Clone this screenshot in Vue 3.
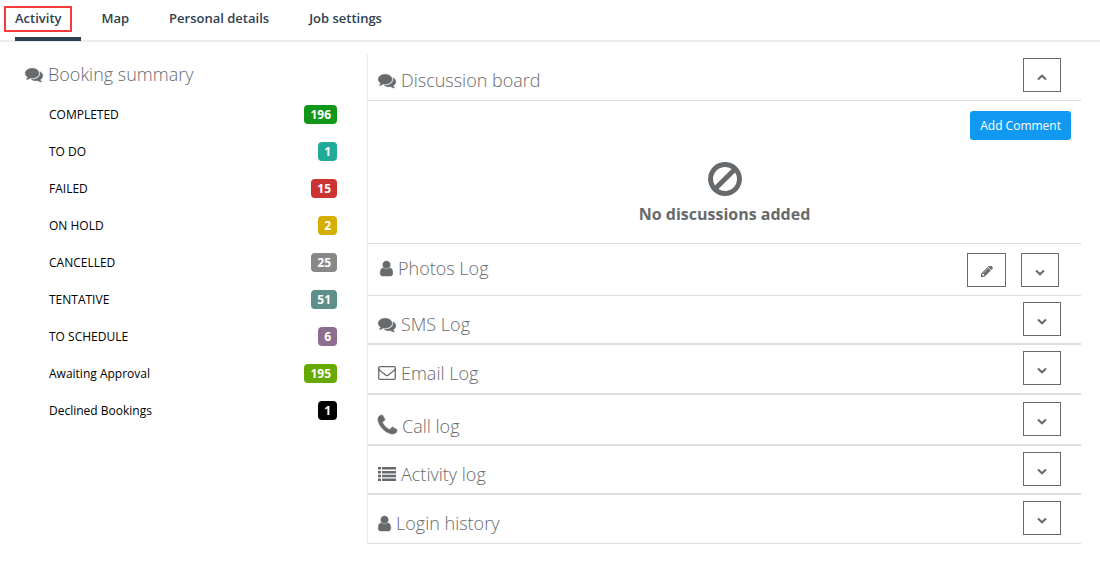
<script setup>
import { ref } from 'vue'

const active = ref('Activity')
const tabs = ['Activity', 'Map', 'Personal details', 'Job settings']

const summary = [
  { label: 'COMPLETED', count: 196, tone: 'green' },
  { label: 'TO DO', count: 1, tone: 'teal' },
  { label: 'FAILED', count: 15, tone: 'red' },
  { label: 'ON HOLD', count: 2, tone: 'yellow' },
  { label: 'CANCELLED', count: 25, tone: 'grey' },
  { label: 'TENTATIVE', count: 51, tone: 'sage' },
  { label: 'TO SCHEDULE', count: 6, tone: 'purple' },
  { label: 'Awaiting Approval', count: 195, tone: 'lime' },
  { label: 'Declined Bookings', count: 1, tone: 'black' }
]

const icons = {
  comments: {
    box: '0 128 1792 1536',
    d: 'M1408 768q0 139-94 257t-256.500 186.500-353.500 68.500q-86 0-176-16-124 88-278 128-36 9-86 16h-3q-11 0-20.500-8t-11.500-21q-1-3-1-6.500t.5-6.500 2-6l2.500-5t3.500-5.500 4-5 4.500-5 4-4.500q5-6 23-25t26-29.500 22.500-29 25-38.500 20.500-44q-124-72-195-177t-71-224q0-139 94-257t256.500-186.500 353.500-68.500 353.500 68.500 256.500 186.500 94 257zm384 256q0 120-71 224.500t-195 176.500q10 24 20.500 44t25 38.500 22.500 29 26 29.500 23 25q1 1 4 4.500t4.500 5 4 5 3.500 5.500l2.500 5t2 6 .5 6.500-1 6.500q-3 14-13 22t-22 7q-50-7-86-16-154-40-278-128-90 16-176 16-271 0-472-132 58 4 88 4 161 0 309-45t264-129q125-92 192-212t67-254q0-77-23-152 129 71 204 178t75 230z'
  },
  user: {
    box: '256 128 1280 1536',
    d: 'M1536 1399q0 109-62.500 187t-150.500 78h-854q-88 0-150.500-78t-62.500-187q0-85 8.500-160.500t31.500-152 58.500-131 94-89 134.500-34.500q131 128 313 128t313-128q76 0 134.500 34.500t94 89 58.500 131 31.500 152 8.500 160.500zm-256-887q0 159-112.500 271.500t-271.500 112.500-271.500-112.500-112.500-271.500 112.500-271.500 271.500-112.500 271.500 112.500 112.500 271.500z'
  },
  envelope: {
    box: '0 256 1792 1408',
    d: 'M1664 1504v-768q-32 36-69 66-268 206-426 338-51 43-83 67t-86.500 48.500-102.500 24.500h-2q-48 0-102.500-24.500t-86.500-48.500-83-67q-158-132-426-338-37-30-69-66v768q0 13 9.500 22.500t22.500 9.500h1472q13 0 22.500-9.500t9.500-22.500zm0-1051v-24.500l-.5-13-3-12.500-5.500-9-9-7.500-14-2.500h-1472q-13 0-22.500 9.500t-9.500 22.500q0 168 147 284 193 152 401 317 6 5 35 29.500t46 37.500 44.500 31.500 50.500 27.500 43 9h2q20 0 43-9t50.500-27.500 44.500-31.500 46-37.500 35-29.500q208-165 401-317 54-43 100.500-115.500t46.500-131.500zm128-37v1088q0 66-47 113t-113 47h-1472q-66 0-113-47t-47-113v-1088q0-66 47-113t113-47h1472q66 0 113 47t47 113z'
  },
  phone: {
    box: '192 128 1408 1408',
    d: 'M1600 1240q0 27-10 70.500t-21 68.500q-21 50-122 106-94 51-186 51-27 0-53-3.500t-57.500-12.500-47-14.500-55.500-20.500-49-18q-98-35-175-83-127-79-264-216t-216-264q-48-77-83-175-3-9-18-49t-20.500-55.500-14.500-47-12.500-57.500-3.500-53q0-92 51-186 56-101 106-122 25-11 68.500-21t70.500-10q14 0 21 3 18 6 53 76 11 19 30 54t35 63.500 31 53.500q3 4 17.500 25t21.500 35.500 7 28.500q0 20-28.500 50t-62 55-62 53-28.500 46q0 9 5 22.500t8.500 20.500 14 24 11.500 19q76 137 174 235t235 174q2 1 19 11.500t24 14 20.500 8.500 22.500 5q18 0 46-28.500t53-62 55-62 50-28.500q14 0 28.500 7t35.500 21.500 25 17.500q25 15 53.500 31t63.500 35 54 30q70 35 76 53 3 7 3 21z'
  },
  list: {
    box: '0 0 18 14',
    d: 'M0 0h3v2.500H0zM4 0h14v2.500H4zM0 3.900h3v2.500H0zM4 3.900h14v2.500H4zM0 7.700h3v2.500H0zM4 7.700h14v2.500H4zM0 11.500h3V14H0zM4 11.500h14V14H4z'
  },
  pencil: {
    box: '128 256 1536 1408',
    d: 'M491 1536l91-91-235-235-91 91v107h128v128h107zm523-928q0-22-22-22-10 0-17 7l-542 542q-7 7-7 17 0 22 22 22 10 0 17-7l542-542q7-7 7-17zm-54-192l416 416-832 832h-416v-416zm683 96q0 53-37 90l-166 166-416-416 166-165q36-38 90-38 53 0 91 38l235 234q37 39 37 91z'
  },
  ban: {
    box: '128 125 1536 1540',
    d: 'M1440 893q0-161-87-295l-754 753q137 89 297 89 111 0 211.500-43.500t173.500-116.500 116-174.500 43-212.500zm-999 299l755-754q-135-91-300-91-148 0-273 73t-198 199-73 274q0 162 89 299zm1223-299q0 157-61 300t-163.500 246-245 164-298.500 61-298.500-61-245-164-163.500-246-61-300 61-299.500 163.500-245.500 245-164 298.500-61 298.500 61 245 164 163.500 245.500 61 299.500z'
  }
}

const logs = [
  { key: 'photos', title: 'Photos Log', icon: 'user', edit: true },
  { key: 'sms', title: 'SMS Log', icon: 'comments' },
  { key: 'email', title: 'Email Log', icon: 'envelope' },
  { key: 'call', title: 'Call log', icon: 'phone' },
  { key: 'activity', title: 'Activity log', icon: 'list' },
  { key: 'login', title: 'Login history', icon: 'user' }
]
</script>

<template>
  <div class="page">
    <nav class="tabs" aria-label="Profile sections">
      <button
        v-for="t in tabs"
        :key="t"
        type="button"
        class="tab"
        :class="{ active: t === active }"
        @click="active = t"
      >{{ t }}</button>
    </nav>

    <main class="content">
      <section class="summary">
        <h2 class="title">
          <svg class="icon comments" :viewBox="icons.comments.box" aria-hidden="true"><path :d="icons.comments.d" /></svg>
          <span>Booking summary</span>
        </h2>
        <ul class="counts">
          <li v-for="s in summary" :key="s.label">
            <span>{{ s.label }}</span>
            <span class="badge" :class="s.tone">{{ s.count }}</span>
          </li>
        </ul>
      </section>

      <div class="board">
        <section class="row discussion">
          <h2 class="title">
            <svg class="icon comments" :viewBox="icons.comments.box" aria-hidden="true"><path :d="icons.comments.d" /></svg>
            <span>Discussion board</span>
          </h2>
          <div class="actions">
            <button type="button" class="square" aria-label="Collapse Discussion board">
              <svg class="chevron" viewBox="0 0 10 7" aria-hidden="true"><path d="M1 5.500L5 1.700L9 5.500" /></svg>
            </button>
          </div>
        </section>
        <div class="comments-body">
          <button type="button" class="add">Add Comment</button>
          <div class="empty">
            <svg class="icon ban" :viewBox="icons.ban.box" aria-hidden="true"><path :d="icons.ban.d" /></svg>
            <p>No discussions added</p>
          </div>
        </div>
        <section v-for="l in logs" :key="l.key" class="row" :class="l.key">
          <h2 class="title">
            <svg class="icon" :class="l.icon" :viewBox="icons[l.icon].box" aria-hidden="true"><path :d="icons[l.icon].d" /></svg>
            <span>{{ l.title }}</span>
          </h2>
          <div class="actions">
            <button v-if="l.edit" type="button" class="square edit" :aria-label="'Edit ' + l.title">
              <svg class="icon pencil" :viewBox="icons.pencil.box" aria-hidden="true"><path :d="icons.pencil.d" /></svg>
            </button>
            <button type="button" class="square" :aria-label="'Expand ' + l.title">
              <svg class="chevron" viewBox="0 0 10 7" aria-hidden="true"><path d="M1 1.500L5 5.300L9 1.500" /></svg>
            </button>
          </div>
        </section>
      </div>
    </main>
  </div>
</template>

<style>
body {
  background: #fff;
}
</style>

<style scoped>
.page {
  font-family: "Open Sans", "Noto Sans", sans-serif;
  font-size: 12px;
  color: #676a6c;
}
button {
  font-family: inherit;
  cursor: pointer;
}
.tabs {
  display: flex;
  gap: 20px;
  height: 40px;
  padding-left: 15px;
  border-bottom: 2px solid #ebebeb;
}
.tab {
  position: relative;
  height: 41px;
  padding: 0 20px 6px 0;
  border: 0;
  background: none;
  color: #2f4050;
  font-size: 13px;
  font-weight: 600;
  line-height: 18px;
}
.tab.active {
  padding-bottom: 2px;
  border-bottom: 4px solid #2f4050;
}
.tab.active::after {
  content: "";
  position: absolute;
  top: 6px;
  left: -11px;
  right: 9px;
  height: 22px;
  border: 2px solid #f93a3a;
}
.content {
  display: flex;
  padding: 12px 19px 0 25px;
}
.summary {
  width: 312px;
  flex: none;
  margin-right: 30px;
}
.title {
  display: flex;
  align-items: center;
  gap: 5px;
  margin: 0;
  font-size: 18px;
  font-weight: 300;
  line-height: 24px;
}
.summary .title {
  padding-top: 8px;
}
.icon {
  flex: none;
  fill: #676a6c;
}
.title .icon {
  overflow: visible;
}
.comments,
.user,
.phone {
  stroke: #676a6c;
  stroke-width: 50;
}
.comments { width: 18px; height: 15px; }
.user { width: 13px; height: 15px; }
.envelope { width: 18px; height: 14px; }
.phone { width: 19px; height: 19px; margin-bottom: 4px; }
.list { width: 18px; height: 14px; }
.pencil { width: 12px; height: 11px; }
.ban { width: 34px; height: 34px; }
.counts {
  list-style: none;
  margin: 10px 0 0;
  padding: 0 0 0 24px;
  color: #000;
}
.counts li {
  display: flex;
  justify-content: space-between;
  align-items: center;
  height: 37px;
  line-height: 18px;
}
.badge {
  padding: 0 6px;
  border-radius: 4px;
  color: #fff;
  font-weight: 700;
  line-height: 19px;
}
.green { background: #109618; }
.teal { background: #22aa99; }
.red { background: #cc3333; }
.yellow { background: #d6ae00; }
.grey { background: #888; }
.sage { background: #5e8f88; }
.purple { background: #8e6e8e; }
.lime { background: #66aa00; }
.black { background: #000; }
.board {
  flex: 1;
  min-width: 0;
  border-left: 1px solid #e7eaec;
}
.row {
  display: flex;
  justify-content: space-between;
  align-items: flex-start;
  padding: 6px 20px 7px 10px;
  border-bottom: 2px solid #ddd;
}
.row .title {
  padding-top: 10px;
}
.discussion {
  padding-top: 4px;
  padding-bottom: 8px;
  border-bottom-width: 1px;
}
.photos {
  padding: 9px 22px 8px 12px;
  border-bottom-width: 1px;
}
.photos .title {
  padding-top: 3px;
}
.email {
  padding-bottom: 8px;
}
.call {
  padding-top: 7px;
  padding-bottom: 6px;
}
.call .title {
  padding-top: 12px;
}
.login {
  padding-bottom: 8px;
  border-bottom-width: 1px;
}
.actions {
  display: flex;
  gap: 15px;
}
.square {
  display: flex;
  align-items: center;
  justify-content: center;
  width: 38px;
  height: 34px;
  padding: 4px 0 0;
  border: 1px solid #676a6c;
  border-radius: 0;
  background: #fff;
}
.edit {
  width: 39px;
  padding-top: 2px;
}
.chevron {
  width: 10px;
  height: 7px;
  fill: none;
  stroke: #676a6c;
  stroke-width: 2;
}
.comments-body {
  display: flex;
  flex-direction: column;
  padding: 10px 10px 17px 0;
  border-bottom: 1px solid #ddd;
}
.add {
  align-self: flex-end;
  height: 29px;
  padding: 0 10px;
  border: 0;
  border-radius: 3px;
  background: #1199f2;
  color: #fff;
  font-size: 12px;
  line-height: 18px;
}
.empty {
  display: flex;
  flex-direction: column;
  align-items: center;
  gap: 6px;
  padding: 22px 0 0 10px;
}
.empty p {
  margin: 0;
  font-size: 16px;
  font-weight: 700;
  line-height: 24px;
}
</style>
